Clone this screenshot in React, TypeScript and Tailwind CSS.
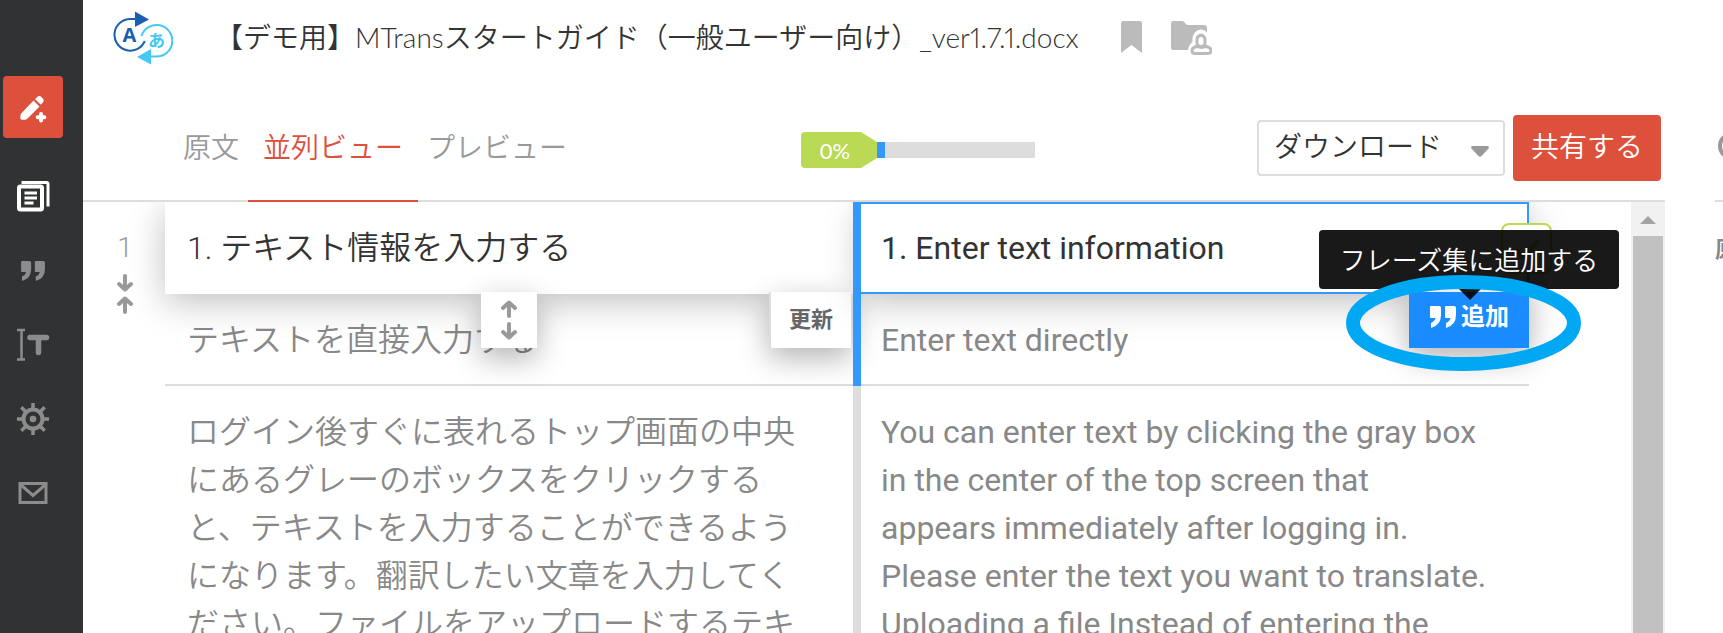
import React from "react";

function Logo() {
  return (
    <svg className="w-[60px] h-[56px]" viewBox="113 10 60 56" fill="none">
      <path d="M135 19h-4.500a15.800 15.800 0 1 0 14.300 22" stroke="#1b60ae" strokeWidth="2" />
      <path d="M135 11.500l14 8-14 7.500z" fill="#1b60ae" />
      <path d="M141.500 36a15.800 15.800 0 1 1 15 20.600h-7" stroke="#44c8f5" strokeWidth="2" />
      <path d="M151 49l-14 8 14 7.500z" fill="#44c8f5" />
      <text x="129.500" y="41.500" textAnchor="middle" fontSize="20" fontWeight="700" fill="#1b60ae" fontFamily="Open Sans, sans-serif">A</text>
      <text x="156.500" y="46.500" textAnchor="middle" fontSize="17" fontWeight="700" fill="#44c8f5" fontFamily="Noto Sans CJK JP, sans-serif">あ</text>
    </svg>
  );
}

function PencilPlus() {
  return (
    <svg className="w-8 h-8" viewBox="0 0 32 32" fill="#fff">
      <path d="M16.500 7.500l6 6L10 26q-.8.800-2 .8H5q-2 0-1.700-2l.3-3q.2-1 1-1.800z" />
      <path d="M18 6.200l1.800-1.800a3.500 3.500 0 0 1 5 0l.6.600a3.500 3.500 0 0 1 0 5l-1.500 1.800z" />
      <path d="M24 21v6.500M20.700 24.200h6.600" stroke="#fff" strokeWidth="4" strokeLinecap="round" />
    </svg>
  );
}

function Docs() {
  return (
    <svg className="w-9 h-9" viewBox="0 0 36 36" fill="none" stroke="#fff">
      <path d="M6.500 3.500h25q1.500 0 1.500 1.500v22.500" strokeWidth="3" />
      <rect x="4" y="7.500" width="23" height="23" rx="1.500" strokeWidth="4" />
      <path d="M9.500 14h12.500M9.500 19h12.500M9.500 24h9" strokeWidth="3" />
    </svg>
  );
}

function Quote({ className }: { className: string }) {
  return (
    <svg className={className} viewBox="0 0 28 24" fill="currentColor">
      <path d="M2 1h8q2 0 2 2v7q0 10-10 13v-5q4-2 4.500-5H2q-1 0-1-1V2q0-1 1-1z" />
      <path d="M17 1h8q2 0 2 2v7q0 10-10 13v-5q4-2 4.500-5H17q-1 0-1-1V2q0-1 1-1z" />
    </svg>
  );
}

function TextCursor() {
  return (
    <svg className="w-9 h-9" viewBox="0 0 36 36" fill="none" stroke="currentColor">
      <path d="M2 3h8M2 32.500h8M6.500 3v29.500" strokeWidth="2.500" />
      <path d="M15 10.500h16.500M23.500 11v14.500" strokeWidth="5.500" strokeLinecap="round" />
    </svg>
  );
}

function Gear() {
  return (
    <svg className="w-9 h-9" viewBox="0 0 36 36" fill="none" stroke="currentColor">
      <circle cx="18" cy="18" r="9.500" strokeWidth="4" />
      <circle cx="18" cy="18" r="3.300" fill="currentColor" stroke="none" />
      <path d="M18 2v6M18 28v6M2 18h6M28 18h6M6.300 6.300l4.500 4.500M25.200 25.200l4.500 4.500M6.300 29.700l4.500-4.500M25.200 10.800l4.500-4.500" strokeWidth="3.500" />
    </svg>
  );
}

function Mail() {
  return (
    <svg className="w-9 h-9" viewBox="0 0 36 36" fill="none" stroke="currentColor" strokeWidth="3">
      <rect x="5" y="8.500" width="26" height="19" />
      <path d="M6 10l12 10.500L30 10" />
    </svg>
  );
}

// pointing up; rotate for the other direction
function Arrow({ className }: { className?: string }) {
  return (
    <svg className={`w-[18px] h-[18px] ${className || ""}`} viewBox="0 0 18 18" fill="none" stroke="#999" strokeWidth="4" strokeLinecap="round" strokeLinejoin="round">
      <path d="M9 16V3M3 8l6-5.500L15 8" />
    </svg>
  );
}

const menu = [
  { name: "ドキュメント", icon: <Docs />, active: true },
  { name: "フレーズ集", icon: <Quote className="w-[26px] h-[22px]" /> },
  { name: "用語集", icon: <TextCursor /> },
  { name: "設定", icon: <Gear /> },
  { name: "メール", icon: <Mail /> },
];

function Sidebar() {
  return (
    <nav className="w-[83px] shrink-0 bg-[#303234] pt-[76px] pl-[3px] flex flex-col">
      <button aria-label="新規作成" className="w-[60px] h-[62px] pt-1 rounded bg-[#dd503c] flex items-center justify-center">
        <PencilPlus />
      </button>
      <div className="mt-[22px] w-[60px] flex flex-col">
        {menu.map((item) => (
          <button
            key={item.name}
            aria-label={item.name}
            className={`h-[74px] flex items-center justify-center ${item.active ? "text-white" : "text-[#8c8c8c]"}`}
          >
            {item.icon}
          </button>
        ))}
      </div>
    </nav>
  );
}

function TitleBar() {
  return (
    <div className="flex items-center h-[76px] pl-[30px]">
      <Logo />
      <h1 className="ml-[42px] pb-[2px] text-[28px] leading-10 font-[350] proportional-nums text-[#333] whitespace-nowrap font-[Lato,'Noto_Sans_CJK_JP',sans-serif]">
        【デモ用】MTransスタートガイド（一般ユーザー向け）_ver1.7.1.docx
      </h1>
      <button aria-label="ブックマーク" className="ml-[42px] pb-[2px]">
        <svg className="w-[21px] h-8" viewBox="0 0 21 32" fill="#bbb">
          <path d="M2 0h17q2 0 2 2v30l-10.500-8L0 32V2q0-2 2-2z" />
        </svg>
      </button>
      <button aria-label="フォルダ共有" className="ml-7">
        <svg className="w-[42px] h-9" viewBox="0 0 42 36">
          <path d="M3 1h10l4 4h17q3 0 3 3v19q0 3-3 3H3q-2 0-2-3V3q0-2 2-2z" fill="#bbb" />
          <path d="M24.500 19a6.500 7.500 0 0 1 13 0v4q4 2 4 8v4H20v-4q0-5 4.500-8z" fill="#bbb" stroke="#fff" strokeWidth="4" />
          <rect x="27" y="15.500" width="8" height="11" rx="4" fill="#fff" stroke="#bbb" strokeWidth="3" />
          <path d="M27 26.500q-5 1-5 4t3 3h13q3 0 3-3t-5-4q-4.500 2-9 0z" fill="#fff" stroke="#bbb" strokeWidth="3" />
        </svg>
      </button>
    </div>
  );
}

function Toolbar() {
  const tab = "h-full px-[15px] -mx-[3px] pt-1 flex items-center border-b-2";
  return (
    <div className="flex items-center justify-between h-[126px] border-b-2 border-[#ddd] text-[28px] font-[350]">
      <div className="flex self-end h-[108px] -mb-[2px] pl-[88px]">
        <a href="#source" className={`${tab} border-transparent text-[#999]`}>原文</a>
        <a href="#parallel" className={`${tab} border-[#dd503c] text-[#dd503c]`}>並列ビュー</a>
        <a href="#preview" className={`${tab} border-transparent text-[#999]`}>プレビュー</a>
      </div>
      <div className="flex items-center mt-6">
        <div className="w-[76px] h-9 pr-2 rounded bg-[#bada55] text-white text-[22px] font-normal flex items-center justify-center font-[Lato,sans-serif] [clip-path:polygon(0_0,60px_0,100%_10px,100%_26px,60px_100%,0_100%)]">
          0%
        </div>
        <div className="w-[158px] h-4 bg-[#ddd]">
          <div className="w-2 h-full bg-[#39f]" />
        </div>
      </div>
      <div className="flex items-center gap-2 mt-5 pr-1 text-[#333]">
        <div className="flex h-14">
          <button className="w-[200px] border-2 border-r-0 border-[#ddd] rounded-l">ダウンロード</button>
          <button aria-label="形式を選択" className="w-12 pt-[6px] border-2 border-l-0 border-[#ddd] rounded-r flex items-center justify-center">
            <svg className="w-[18px] h-[11px]" viewBox="0 0 18 11" fill="#999">
              <path d="M1.500 0h15q2 0 1 2.500L10.500 10q-1.500 1.500-3 0L.5 2.500Q-.5 0 1.500 0z" />
            </svg>
          </button>
        </div>
        <button className="w-[148px] h-[66px] rounded bg-[#dd503c] text-white">共有する</button>
      </div>
    </div>
  );
}

function Tooltip() {
  return (
    <div role="tooltip" className="absolute bottom-[59px] -right-[90px] w-[300px] h-[59px] pt-[2px] rounded bg-black/90 text-white text-[26px] font-[350] whitespace-nowrap flex items-center justify-center">
      フレーズ集に追加する
      <svg className="absolute top-full left-[140px] w-[22px] h-[11px]" viewBox="0 0 22 11" fill="#000" fillOpacity="0.9">
        <path d="M0 0h22L11 11z" />
      </svg>
    </div>
  );
}

function ActiveSource() {
  return (
    <div className="relative bg-white shadow-[0_8px_36px_rgba(0,0,0,0.25)]">
      <p className="px-[22px] py-[22px] font-[350] text-[#333]">1. テキスト情報を入力する</p>
      <button aria-label="文を分割" className="absolute left-[316px] -bottom-[54px] w-14 h-14 bg-white shadow-[0_10px_30px_rgba(0,0,0,0.3)] flex flex-col items-center justify-center gap-1">
        <Arrow />
        <Arrow className="rotate-180" />
      </button>
      <button className="absolute right-[2px] -bottom-[54px] w-[82px] h-14 bg-white border-l-2 border-[#ddd] shadow-[0_10px_30px_rgba(0,0,0,0.3)] text-[22px] leading-8 font-bold text-[#666]">
        更新
      </button>
    </div>
  );
}

function ActiveTarget() {
  return (
    <div className="relative bg-white border-2 border-l-0 border-[#39f] shadow-[0_8px_36px_rgba(0,0,0,0.25)]">
      <p className="px-5 py-5 text-[#333]">1. Enter text information</p>
      <button aria-label="確認済みにする" className="absolute top-[19px] -right-[25px] w-[51px] h-[51px] rounded-lg bg-white border-2 border-[#bada55] flex items-center justify-center">
        <svg className="w-7 h-6" viewBox="0 0 28 24" fill="none" stroke="#bada55" strokeWidth="5">
          <path d="M2 12l8 8L26 3" />
        </svg>
      </button>
      <div className="absolute -bottom-[56px] -right-[2px]">
        <button className="w-[120px] h-14 pb-[6px] bg-[#1a8cff] text-white text-2xl font-bold shadow-[0_10px_30px_rgba(0,0,0,0.3)] flex items-center justify-center gap-1">
          <Quote className="w-7 h-6" />
          追加
        </button>
        <Tooltip />
        <svg className="absolute -top-[17px] -left-[63px] w-[235px] h-[96px] pointer-events-none" viewBox="0 0 235 96" fill="none">
          <ellipse cx="117.500" cy="48" rx="110.500" ry="41" stroke="#00a8f4" strokeWidth="14" />
        </svg>
      </div>
    </div>
  );
}

function Editor() {
  return (
    <div className="flex-1 min-h-0 overflow-hidden flex">
      <div className="w-[82px] shrink-0 pt-[26px] pl-[2px] flex flex-col items-center text-[#999] text-[28px] leading-10">
        <span className="font-light">1</span>
        <div className="flex flex-col gap-1 mt-[6px]">
          <Arrow className="rotate-180" />
          <Arrow />
        </div>
      </div>
      <div className="flex-1 min-w-0 grid grid-cols-[688px_8px_1fr] grid-rows-[92px_92px_auto] text-[32px] leading-[48px] text-[#888]">
        <div className="relative z-10"><ActiveSource /></div>
        <div className="relative z-20 row-span-2 bg-[#39f]" />
        <div className="relative z-10"><ActiveTarget /></div>
        <p className="px-[22px] py-[22px] font-[350] border-b-2 border-[#ddd]">テキストを直接入力する</p>
        <p className="px-5 py-[22px] border-b-2 border-[#ddd]">Enter text directly</p>
        <p className="pl-[22px] pr-14 pt-[22px] font-[350]">
          ログイン後すぐに表れるトップ画面の中央にあるグレーのボックスをクリックすると、テキストを入力することができるようになります。翻訳したい文章を入力してください。ファイルをアップロードするテキ
        </p>
        <div className="bg-[#ddd]" />
        <p className="pl-5 pr-10 pt-[22px]">
          You can enter text by clicking the gray box in the center of the top screen that appears immediately after logging in. Please enter the text you want to translate. Uploading a file Instead of entering the
        </p>
      </div>
      <div className="ml-[102px] w-[34px] shrink-0 bg-[#f1f1f1] flex flex-col items-center">
        <svg className="w-[34px] h-[34px]" viewBox="0 0 34 34" fill="#a3a3a3">
          <path d="M9 22l8-8 8 8z" />
        </svg>
        <div className="w-[30px] flex-1 bg-[#c1c1c1]" />
      </div>
    </div>
  );
}

export default function App() {
  return (
    <div className="h-screen flex overflow-hidden bg-white font-[Roboto,'Noto_Sans_CJK_JP',sans-serif]">
      <Sidebar />
      <main className="flex-1 min-w-0 flex flex-col">
        <TitleBar />
        <Toolbar />
        <Editor />
      </main>
      <aside className="ml-[50px] w-2 shrink-0 overflow-hidden whitespace-nowrap">
        <div className="h-[202px] pt-[132px] pl-[3px] border-b-2 border-[#ddd]">
          <svg className="w-7 h-7 max-w-none" viewBox="0 0 28 28" fill="none" stroke="#999" strokeWidth="4">
            <circle cx="14" cy="14" r="12" />
          </svg>
        </div>
        <p className="mt-[26px] text-[22px] leading-[44px] font-bold text-[#888]">原文</p>
      </aside>
    </div>
  );
}
